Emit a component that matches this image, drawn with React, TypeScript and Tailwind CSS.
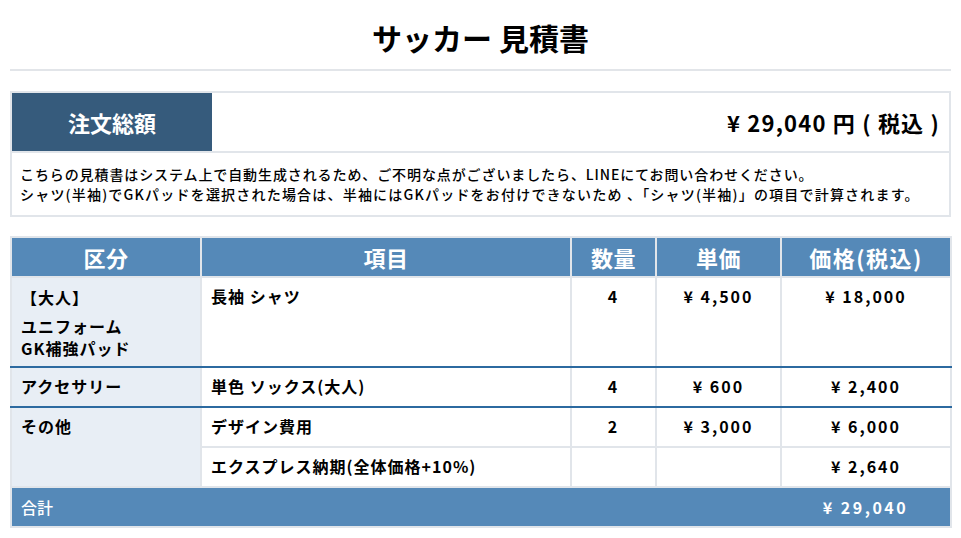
import React from "react";

const gray = "border-[#e1e5ea]";

const cell = "border-2 border-[#e1e5ea] align-top leading-[22px]";
const num = "pt-[7px] text-center tracking-[2px]";

export default function App() {
  return (
    <div className="w-[961px] bg-white px-[10px] pb-[10px] font-['Noto_Sans_CJK_JP',sans-serif] text-black">
      <h1 className="pt-[18px] pb-[13px] text-center text-[30px] font-bold leading-[38px]">
        サッカー 見積書
      </h1>
      <div className="h-[2px] bg-[#e2e5e9]" />

      {/* 注文総額 */}
      <div className={`mt-[20px] border-2 ${gray}`}>
        <div className="flex h-[58px] items-stretch">
          <div className="flex w-[200px] items-center justify-center bg-[#365b7c] text-[22px] font-bold text-white">
            注文総額
          </div>
          <div className="flex flex-1 items-center justify-end pr-[9px] text-[22px] font-bold tracking-[1.2px]">
            ¥ 29,040 円 ( 税込 )
          </div>
        </div>
        <div className="h-[2px] bg-[#e1e5ea]" />
        <div className="pt-[11px] pb-[11px] pl-[8px] text-[14px] font-medium leading-[20px] tracking-[0.9px]">
          <p>こちらの見積書はシステム上で自動生成されるため、ご不明な点がございましたら、LINEにてお問い合わせください。</p>
          <p className="tracking-[1.2px]">シャツ(半袖)でGKパッドを選択された場合は、半袖にはGKパッドをお付けできないため 、「シャツ(半袖)」の項目で計算されます。</p>
        </div>
      </div>

      <table className={`mt-[19px] w-[941px] table-fixed border-collapse border-2 ${gray} text-[16px] font-bold tracking-[1px]`}>
        <colgroup>
          <col className="w-[190px]" />
          <col className="w-[370px]" />
          <col className="w-[85px]" />
          <col className="w-[125px]" />
          <col className="w-[170px]" />
        </colgroup>
        <thead>
          <tr className="h-[40px] bg-[#5589b8] text-[22px] tracking-[0.5px] text-white">
            <th className="border-2 border-[#e1e5ea] font-bold">区分</th>
            <th className="border-2 border-[#e1e5ea] font-bold">項目</th>
            <th className="border-2 border-[#e1e5ea] font-bold">数量</th>
            <th className="border-2 border-[#e1e5ea] font-bold">単価</th>
            <th className="border-2 border-[#e1e5ea] font-bold tracking-[1.5px]">価格(税込)</th>
          </tr>
        </thead>
        <tbody>
          <tr className="h-[90px]">
            <td className={`${cell} border-b-[#2c6aa0] bg-[#e8eef5] px-[9px] pt-[8px]`}>
              <div className="mb-[7px]">【大人】</div>
              <div>ユニフォーム</div>
              <div>GK補強パッド</div>
            </td>
            <td className={`${cell} border-b-[#2c6aa0] px-[9px] pt-[7px]`}>長袖 シャツ</td>
            <td className={`${cell} border-b-[#2c6aa0] ${num}`}>4</td>
            <td className={`${cell} border-b-[#2c6aa0] ${num}`}>¥ 4,500</td>
            <td className={`${cell} border-b-[#2c6aa0] ${num}`}>¥ 18,000</td>
          </tr>
          <tr className="h-[40px]">
            <td className={`${cell} border-y-[#2c6aa0] bg-[#e8eef5] px-[9px] pt-[7px]`}>アクセサリー</td>
            <td className={`${cell} border-y-[#2c6aa0] px-[9px] pt-[7px]`}>単色 ソックス(大人)</td>
            <td className={`${cell} border-y-[#2c6aa0] ${num}`}>4</td>
            <td className={`${cell} border-y-[#2c6aa0] ${num}`}>¥ 600</td>
            <td className={`${cell} border-y-[#2c6aa0] ${num}`}>¥ 2,400</td>
          </tr>
          <tr className="h-[40px]">
            <td rowSpan={2} className={`${cell} border-t-[#2c6aa0] bg-[#e8eef5] px-[9px] pt-[7px]`}>その他</td>
            <td className={`${cell} border-t-[#2c6aa0] px-[9px] pt-[7px]`}>デザイン費用</td>
            <td className={`${cell} border-t-[#2c6aa0] ${num}`}>2</td>
            <td className={`${cell} border-t-[#2c6aa0] ${num}`}>¥ 3,000</td>
            <td className={`${cell} border-t-[#2c6aa0] ${num}`}>¥ 6,000</td>
          </tr>
          <tr className="h-[40px]">
            <td className={`${cell} px-[9px] pt-[7px]`}>エクスプレス納期(全体価格+10%)</td>
            <td className={cell}></td>
            <td className={cell}></td>
            <td className={`${cell} ${num}`}>¥ 2,640</td>
          </tr>
          <tr className="h-[40px] bg-[#5589b8] text-white">
            <td colSpan={4} className="border-y-2 border-l-2 border-[#e1e5ea] px-[9px] align-middle font-medium tracking-normal">
              合計
            </td>
            <td className="border-y-2 border-r-2 border-[#e1e5ea] text-center align-middle tracking-[2.5px]">¥ 29,040</td>
          </tr>
        </tbody>
      </table>
    </div>
  );
}
